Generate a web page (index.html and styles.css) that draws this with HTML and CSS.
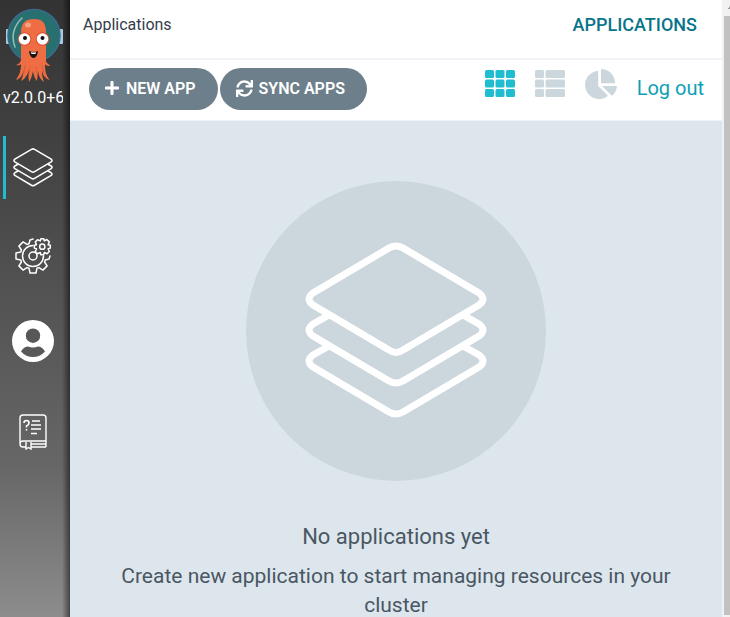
FILE: index.html
```html
<!DOCTYPE html>
<html lang="en">
<head>
<meta charset="utf-8">
<title>Applications</title>
<link rel="stylesheet" href="styles.css">
</head>
<body>
<svg class="defs" aria-hidden="true">
  <symbol id="stack" viewBox="0 0 182 178">
    <g fill="none" stroke="currentColor" stroke-linejoin="round">
      <path d="M84 6Q91 2 98 6L174 51Q182 57 174 63L98 108Q91 113 84 108L8 63Q0 57 8 51Z"/>
      <path d="M24 73L8 82Q0 88 8 94L84 139Q91 143 98 139L174 94Q182 88 174 82L158 73"/>
      <path d="M24 104L8 113Q0 119 8 125L84 170Q91 174 98 170L174 125Q182 119 174 113L158 104"/>
    </g>
  </symbol>
</svg>
<nav class="sidebar">
  <svg class="logo" viewBox="0 0 60 78" role="img" aria-label="Argo">
    <rect x="1" y="22" width="4" height="15" rx="1" fill="#a9cce0"/>
    <rect x="54" y="22" width="4" height="15" rx="1" fill="#a9cce0"/>
    <circle cx="29" cy="28.500" r="26" fill="#27706f" stroke="#3a6a8c" stroke-width="1.5"/>
    <path d="M10 40Q4 24 17 11" fill="none" stroke="#91b9b5" stroke-width="1.6" stroke-linecap="round"/>
    <path d="M16 26C16 15 21 12 29 12S41 15 41 26V54C42 57 44 57 45 59Q41 59 40 57C40 64 41 69 45 73Q39 72 37 64C37 69 38 72 39 75Q34 72 33 64L32 74Q29 71 28 64C27 69 26 72 24 75Q23 70 24 63C22 69 20 72 16 74Q18 69 19 63C17 69 15 72 11 73C15 67 16 63 16 57Q15 59 11 58C14 57 15 56 16 53Z" fill="#ee6d43"/>
    <path d="M20 58L19 66M25 60L24 68M31 60L32 68M37 58L39 67" stroke="#d9603a" fill="none"/>
    <ellipse cx="23" cy="18" rx="3" ry="2.5" fill="#f5a183"/>
    <circle cx="19.500" cy="32" r="6.800" fill="#d94f32"/><circle cx="37.500" cy="32" r="6.800" fill="#d94f32"/>
    <circle cx="19.500" cy="32" r="5.800" fill="#fff"/><circle cx="37.500" cy="32" r="5.800" fill="#fff"/>
    <circle cx="20" cy="31" r="2" fill="#111"/><circle cx="37.500" cy="31" r="2" fill="#111"/>
    <path d="M24 44Q28.500 46 33 44Q32 51 28.500 51T24 44Z" fill="#151515"/>
    <path d="M26 45Q28.500 46 31 45L30.500 47H26.500Z" fill="#fff"/>
  </svg>
  <div class="version">v2.0.0+6</div>
  <a class="nav-item active" href="#" aria-label="Applications"><svg class="nav-stack"><use href="#stack"/></svg></a>
  <a class="nav-item" href="#" aria-label="Settings">
    <svg class="nav-gear" viewBox="-20 -20 40 40" fill="none" stroke="#fff" stroke-width="1.5" stroke-linejoin="round" stroke-linecap="round">
      <path d="M0-17L-3-16L-4-12.200L-6-11.600L-9.900-14.100L-14.100-9.900L-11.600-6L-12.200-4L-17-3V3L-12.200 4L-11.600 6L-14.100 9.900L-9.900 14.100L-6 11.600L-4 12.200L-3 17H3L4 12.200L6 11.600L9.900 14.100L14.100 9.900L11.600 6L12.200 4L16 3L17 0"/>
      <path d="M0-10.500A10.500 10.500 0 1 0 10.500 0"/>
      <circle r="4"/>
      <g transform="translate(9.300 -9.300)">
        <path d="M-1.400-8H1.400L2-5.800L4.500-7.200L7-4.800L5.800-2L8-1.400V1.400L5.800 2L7 4.800L4.800 7L2 5.800L1.400 8H-1.400L-2 5.800L-4.800 7L-7 4.800L-5.800 2L-8 1.400V-1.400L-5.800-2L-7-4.800L-4.800-7L-2-5.800Z"/>
        <circle r="2.600"/>
      </g>
    </svg>
  </a>
  <a class="nav-item" href="#" aria-label="User info">
    <svg class="nav-user" viewBox="0 0 42 42"><path fill="#fff" fill-rule="evenodd" d="M21 0a21 21 0 1 0 0 42a21 21 0 1 0 0-42ZM21 8.500a7.200 7.200 0 1 1 0 14.400a7.200 7.200 0 1 1 0-14.400ZM9 31.500Q12 26.500 16 26.500Q21 28.500 26 26.500Q30 26.500 33 31.500Q28 37 21 37T9 31.500Z"/></svg>
  </a>
  <a class="nav-item" href="#" aria-label="Documentation">
    <svg class="nav-doc" viewBox="0 0 28 36" fill="none" stroke="#fff" stroke-width="1.400">
      <path d="M7 33H4Q1 33 1 30V4Q1 1 4 1H24Q27 1 27 4V27H4Q1 27 1 30M12 33H27M27 27V33M12 30H27"/>
      <path d="M7 28V35L9.500 33.500L12 35V28"/>
      <path d="M5 9Q5 6.500 7.500 6.500T10 9Q10 11 7.500 12V13.500M7.500 15V16.500" stroke-width="1.600"/>
      <path d="M13 7H21M12 11H22M12 15H22M12 19.500H18" stroke-width="1.300"/>
    </svg>
  </a>
</nav>
<main class="page">
  <header class="topbar">
    <span class="crumb">Applications</span>
    <h1 class="page-title">APPLICATIONS</h1>
  </header>
  <div class="toolbar">
    <div class="actions">
      <button class="btn" type="button"><svg class="ico-plus" viewBox="0 32 448 448"><path d="M416 208H272V64c0-17.670-14.330-32-32-32h-32c-17.670 0-32 14.330-32 32v144H32c-17.670 0-32 14.330-32 32v32c0 17.670 14.330 32 32 32h144v144c0 17.670 14.330 32 32 32h32c17.670 0 32-14.330 32-32V304h144c17.670 0 32-14.330 32-32v-32c0-17.670-14.330-32-32-32z"/></svg>NEW APP</button>
      <button class="btn" type="button"><svg class="ico-sync" viewBox="0 0 512 512"><path d="M440.650 12.570l4 82.770A247.160 247.160 0 0 0 255.830 8C134.730 8 33.910 94.920 12.290 209.820A12 12 0 0 0 24.090 224h49.050a12 12 0 0 0 11.670-9.260 175.910 175.910 0 0 1 317-56.940l-101.460-4.860a12 12 0 0 0-12.570 12v47.410a12 12 0 0 0 12 12H500a12 12 0 0 0 12-12V12a12 12 0 0 0-12-12h-47.370a12 12 0 0 0-11.980 12.570zM255.830 432a175.610 175.610 0 0 1-146-77.800l101.800 4.870a12 12 0 0 0 12.570-12v-47.400a12 12 0 0 0-12-12H12a12 12 0 0 0-12 12V500a12 12 0 0 0 12 12h47.350a12 12 0 0 0 12-12.600l-4.150-82.570A247.170 247.170 0 0 0 255.830 504c121.110 0 221.930-86.920 243.550-201.820a12 12 0 0 0-11.800-14.180h-49.050a12 12 0 0 0-11.670 9.260A175.860 175.860 0 0 1 255.830 432z"/></svg>SYNC APPS</button>
    </div>
    <div class="views">
      <a class="view selected" href="#" aria-label="Tiles"><svg class="ico-view" viewBox="0 0 30 27"><g id="col"><rect width="9" height="8" rx="1.500"/><rect y="9.500" width="9" height="8" rx="1.500"/><rect y="19" width="9" height="8" rx="1.500"/></g><use href="#col" x="10.500"/><use href="#col" x="21"/></svg></a>
      <a class="view" href="#" aria-label="List"><svg class="ico-view" viewBox="0 0 30 27"><use href="#col"/><rect x="10.500" width="19.500" height="8" rx="1.500"/><rect x="10.500" y="9.500" width="19.500" height="8" rx="1.500"/><rect x="10.500" y="19" width="19.500" height="8" rx="1.500"/></svg></a>
      <a class="view" href="#" aria-label="Summary"><svg class="ico-pie" viewBox="0 16 544 512"><path d="M527.790 288H290.500l158.030 158.030c6.040 6.040 15.980 6.530 22.190.68 38.700-36.460 65.320-85.610 73.130-140.860 1.340-9.460-6.510-17.850-16.060-17.850zm-15.830-64.800C503.720 103.740 408.260 8.280 288.800.04 279.680-.59 272 7.100 272 16.240V240h223.770c9.140 0 16.820-7.680 16.190-16.800zM224 288V50.710c0-9.550-8.390-17.400-17.840-16.060C86.990 51.490-4.100 155.600.14 280.370 4.500 408.510 114.830 513.590 243.030 511.980c50.400-.63 96.970-16.870 135.260-44.030 7.900-5.600 8.420-17.230 1.570-24.080L224 288z"/></svg></a>
      <a class="logout" href="#">Log out</a>
    </div>
  </div>
  <section class="empty">
    <div class="disc"><svg class="disc-stack"><use href="#stack"/></svg></div>
    <h2 class="empty-title">No applications yet</h2>
    <p class="empty-text">Create new application to start managing resources in your cluster</p>
  </section>
</main>
<div class="scroll" aria-hidden="true"><svg class="arrow" viewBox="0 0 6 16"><path d="M6 6V9H4V8H5V7Z" fill="#999"/></svg><div class="thumb"></div></div>
</body>
</html>
```
FILE: styles.css
```css
* { box-sizing: border-box; }
body {
  margin: 0;
  display: flex;
  height: 100vh;
  overflow: hidden;
  font-family: Roboto, "Liberation Sans", sans-serif;
  background: #dee6ed;
}
a { text-decoration: none; }
.defs { position: absolute; width: 0; height: 0; }

.sidebar {
  flex: 0 0 70px;
  display: flex;
  flex-direction: column;
  background:
    linear-gradient(to right, transparent 62px, rgba(0, 0, 0, 0.5) 70px),
    linear-gradient(#333, #424242 24%, #676767 76%, #8c8c8c);
}
.logo { width: 60px; height: 78px; margin: 7px 0 0 5px; }
.version {
  width: 60px;
  margin: 4px 0 0 3px;
  overflow: hidden;
  white-space: nowrap;
  font-size: 16px;
  line-height: 18px;
  color: #fff;
}
.nav-item {
  display: flex;
  align-items: center;
  justify-content: center;
  height: 63px;
  margin: 0 7px 25px 3px;
  padding-right: 3px;
  border-left: 3px solid transparent;
  color: #fff;
}
.nav-item.active { margin-top: 29px; border-color: #1fbdd0; }
.nav-stack { width: 40px; height: 39px; stroke-width: 7; }
.nav-gear { width: 40px; height: 40px; }
.nav-user { width: 42px; height: 42px; margin-bottom: 6px; }
.nav-doc { width: 28px; height: 36px; }

.page { flex: 1; min-width: 0; }
.topbar {
  display: flex;
  justify-content: space-between;
  align-items: center;
  height: 60px;
  padding: 0 25px 9px 13px;
  background: #fff;
  border-bottom: 2px solid #eff3f7;
}
.crumb { font-size: 16px; color: #363c4a; }
.page-title { margin: 0; font-size: 18px; font-weight: 500; color: #08748a; }
.toolbar {
  display: flex;
  justify-content: space-between;
  height: 61px;
  padding: 8px 18px 0 19px;
  background: #fff;
  border-bottom: 1px solid #eff3f7;
}
.actions { display: flex; gap: 2px; }
.btn {
  display: flex;
  align-items: center;
  height: 42px;
  padding: 0 22px 2px 16px;
  border: 0;
  border-radius: 21px;
  background: #6d7f8b;
  color: #fff;
  font: 600 16px Roboto, sans-serif;
}
.btn svg { fill: currentColor; }
.ico-plus { width: 14px; height: 14px; margin-right: 7px; }
.ico-sync { width: 17px; height: 17px; margin-right: 6px; }
.views { display: flex; }
.view { margin: 2px 20px 0 0; fill: #ccd6dd; }
.view.selected { fill: #1fbdd0; }
.view svg { display: block; overflow: visible; }
.ico-view { width: 30px; height: 27px; }
.ico-pie { width: 32px; height: 30px; }
.logout { font-size: 20px; line-height: 40px; color: #0d9fb5; }

.empty { padding: 60px 40px 0; text-align: center; color: #495763; }
.disc {
  display: flex;
  align-items: center;
  justify-content: center;
  width: 300px;
  height: 300px;
  margin: 0 auto;
  border-radius: 50%;
  background: #ccd6dd;
  color: #fff;
}
.disc-stack { width: 182px; height: 178px; stroke-width: 7; }
.empty-title { margin: 41px 0 10px; font-size: 22px; line-height: 30px; font-weight: 400; }
.empty-text { margin: 0; font-size: 21px; line-height: 29px; }

.scroll {
  flex: 0 0 8px;
  display: flex;
  flex-direction: column;
  padding: 0 0 2px 2px;
  background: #f1f1f1;
}
.arrow { width: 6px; height: 16px; }
.thumb { flex: 1; background: #c1c1c1; }
```
